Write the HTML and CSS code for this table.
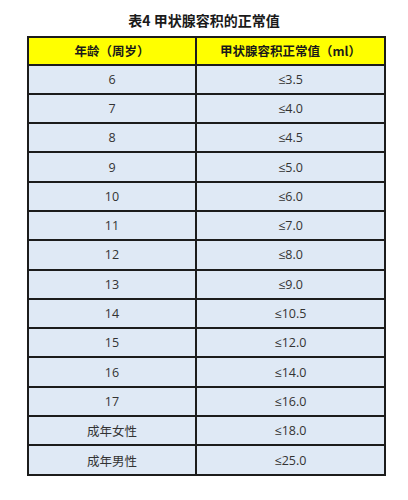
FILE: index.html
```html
<!DOCTYPE html>
<html lang="zh">
<head>
<meta charset="utf-8">
<link rel="stylesheet" href="styles.css">
</head>
<body>
<div class="page">
  <h1 class="title">表4 甲状腺容积的正常值</h1>
  <table class="grid">
    <colgroup><col class="c1"><col class="c2"></colgroup>
    <thead>
      <tr><th>年龄（周岁）</th><th>甲状腺容积正常值（ml）</th></tr>
    </thead>
    <tbody>
      <tr><td>6</td><td>≤3.5</td></tr>
      <tr><td>7</td><td>≤4.0</td></tr>
      <tr><td>8</td><td>≤4.5</td></tr>
      <tr><td>9</td><td>≤5.0</td></tr>
      <tr><td>10</td><td>≤6.0</td></tr>
      <tr><td>11</td><td>≤7.0</td></tr>
      <tr><td>12</td><td>≤8.0</td></tr>
      <tr><td>13</td><td>≤9.0</td></tr>
      <tr><td>14</td><td>≤10.5</td></tr>
      <tr><td>15</td><td>≤12.0</td></tr>
      <tr><td>16</td><td>≤14.0</td></tr>
      <tr><td>17</td><td>≤16.0</td></tr>
      <tr><td>成年女性</td><td>≤18.0</td></tr>
      <tr><td>成年男性</td><td>≤25.0</td></tr>
    </tbody>
  </table>
</div>
</body>
</html>
```
FILE: styles.css
```css
html, body {
  margin: 0;
  padding: 0;
  background: #ffffff;
}
.page {
  width: 408px;
  padding-top: 10px;
  font-family: "Open Sans", "Noto Sans CJK SC", sans-serif;
  color: #333333;
}
.title {
  margin: 0;
  font-size: 14px;
  line-height: 20px;
  font-weight: bold;
  text-align: center;
  color: #1a1a1a;
  font-family: "Noto Sans CJK SC", sans-serif;
}
.grid {
  margin: 6px 0 0 27px;
  border-collapse: collapse;
  width: 357px;
  table-layout: fixed;
  border: 2px solid #1c1c1c;
}
.c1 { width: 168px; }
.c2 { width: 189px; }
.grid th, .grid td {
  border: 2px solid #1c1c1c;
  height: 27.3px;
  padding: 0;
  text-align: center;
  vertical-align: middle;
  font-size: 12.5px;
}
.grid th {
  background: #ffff00;
  font-weight: bold;
  color: #1a1a1a;
  font-family: "Noto Sans CJK SC", sans-serif;
  height: 25.5px;
}
.grid td {
  background: #dfe9f5;
}
```
